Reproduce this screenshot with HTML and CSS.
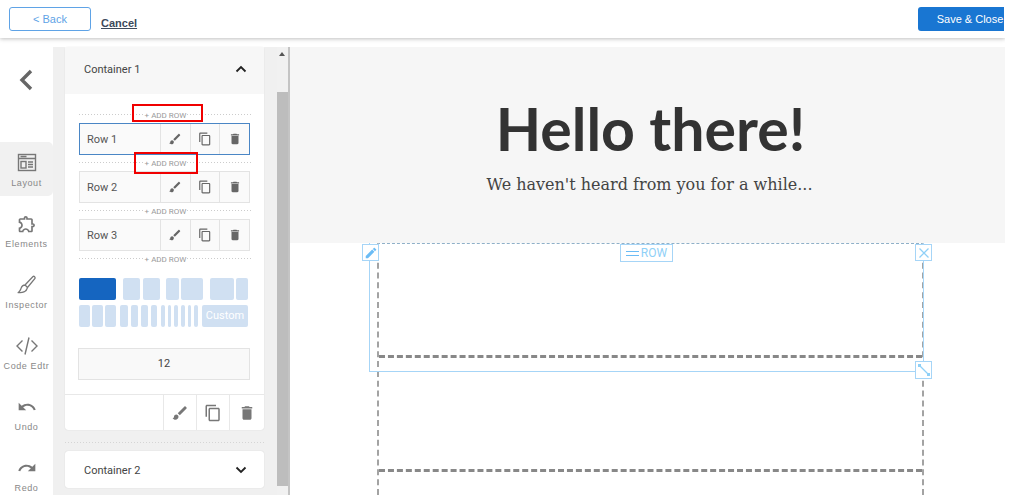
FILE: index.html
```html
<!DOCTYPE html>
<html lang="en">
<head>
  <meta charset="UTF-8">
  <title>Email Editor</title>
  <link rel="stylesheet" href="styles.css">
</head>
<body>

  <svg class="defs" width="0" height="0">
    <symbol id="i-brush" viewBox="0 0 24 24"><path d="M7 14c-1.66 0-3 1.34-3 3 0 1.31-1.16 2-2 2 .92 1.22 2.49 2 4 2 2.21 0 4-1.79 4-4 0-1.66-1.34-3-3-3zm13.71-9.37l-1.34-1.34c-.39-.39-1.02-.39-1.41 0L9 12.25 11.75 15l8.96-8.96c.39-.39.39-1.02 0-1.41z"/></symbol>
    <symbol id="i-copy" viewBox="0 0 24 24"><path d="M16 1H4c-1.1 0-2 .9-2 2v14h2V3h12V1zm3 4H8c-1.1 0-2 .9-2 2v14c0 1.1.9 2 2 2h11c1.1 0 2-.9 2-2V7c0-1.1-.9-2-2-2zm0 16H8V7h11v14z"/></symbol>
    <symbol id="i-trash" viewBox="0 0 24 24"><path d="M6 19c0 1.1.9 2 2 2h8c1.1 0 2-.9 2-2V7H6v12zM19 4h-3.5l-1-1h-5l-1 1H5v2h14V4z"/></symbol>
  </svg>

  <div class="app">

    <!-- Top bar -->
    <header class="topbar">
      <button class="btn-back">&lt; Back</button>
      <a class="cancel">Cancel</a>
      <button class="btn-save">Save &amp; Close</button>
    </header>

    <div class="workspace">

      <!-- Left nav -->
      <nav class="nav">
        <div class="nav-back">
          <svg width="24" height="24" viewBox="0 0 24 24"><path d="M16 3 L7 12 L16 21" fill="none" stroke="#666" stroke-width="3.4"/></svg>
        </div>
        <div class="nav-item active">
          <svg width="20" height="20" viewBox="0 0 20 20" fill="none" stroke="#777" stroke-width="1.4">
            <rect x="1.5" y="1.5" width="17" height="16"/>
            <path d="M1.5 5.5h17M3.5 3.5h6"/>
            <rect x="4" y="8.5" width="5" height="6.5"/>
            <path d="M11 9h5M11 11.5h5M11 14h5" stroke-width="1.5"/>
          </svg>
          <span>Layout</span>
        </div>
        <div class="nav-item">
          <svg width="22" height="22" viewBox="0 0 24 24" fill="#777"><path d="M10.5 4.5c.28 0 .5.22.5.5v2h6v6h2c.28 0 .5.22.5.5s-.22.5-.5.5h-2v6h-2.12c-.68-1.75-2.39-3-4.38-3s-3.7 1.25-4.38 3H4v-2.12c1.75-.68 3-2.39 3-4.38 0-1.99-1.24-3.7-2.99-4.38L4 7h6V5c0-.28.22-.5.5-.5m0-2C9.12 2.5 8 3.62 8 5H4c-1.1 0-1.99.9-1.99 2v3.8h.29c1.49 0 2.7 1.21 2.7 2.7s-1.21 2.7-2.7 2.7H2V20c0 1.1.9 2 2 2h3.8v-.3c0-1.49 1.21-2.7 2.7-2.7s2.7 1.21 2.7 2.7v.3H17c1.1 0 2-.9 2-2v-4c1.38 0 2.5-1.12 2.5-2.5S20.38 11 19 11V7c0-1.1-.9-2-2-2h-4c0-1.38-1.12-2.5-2.5-2.5z"/></svg>
          <span>Elements</span>
        </div>
        <div class="nav-item">
          <svg width="20" height="20" viewBox="0 0 20 20" fill="none" stroke="#777" stroke-width="1.3"><path d="M8 10 L16 1.5 C17 .8 18.6 2 18 3.4 L10.5 12.5 Z M8 10 C5 10 4.5 12 3.8 14 C3.4 15.5 2.5 16.5 1.5 17.5 C5 18 9.5 17 10.5 12.5"/></svg>
          <span>Inspector</span>
        </div>
        <div class="nav-item">
          <svg width="24" height="20" viewBox="0 0 24 20" fill="none" stroke="#777" stroke-width="1.4"><path d="M7.5 4.5 L2 10 L7.5 15.5 M16.5 4.5 L22 10 L16.5 15.5 M14 1.5 L10 18.5"/></svg>
          <span>Code Edtr</span>
        </div>
        <div class="nav-item">
          <svg width="24" height="20" viewBox="0 0 24 24" fill="#777"><path d="M12.5 8c-2.65 0-5.05.99-6.9 2.6L2 7v9h9l-3.62-3.62c1.39-1.16 3.16-1.88 5.12-1.88 3.54 0 6.55 2.31 7.6 5.5l2.37-.78C21.08 11.03 17.15 8 12.5 8z"/></svg>
          <span>Undo</span>
        </div>
        <div class="nav-item">
          <svg width="24" height="20" viewBox="0 0 24 24" fill="#777"><path d="M18.4 10.6C16.55 8.99 14.15 8 11.5 8c-4.65 0-8.58 3.03-9.96 7.22L3.9 16c1.05-3.19 4.05-5.5 7.6-5.5 1.95 0 3.73.72 5.12 1.88L13 16h9V7l-3.6 3.6z"/></svg>
          <span>Redo</span>
        </div>
      </nav>

      <!-- Container panel -->
      <aside class="side">
        <section class="panel">
          <div class="panel-head">
            <span>Container 1</span>
            <svg width="12" height="8" viewBox="0 0 12 8"><path d="M1.5 6.5 L6 2 L10.5 6.5" fill="none" stroke="#222" stroke-width="1.8"/></svg>
          </div>

          <div class="panel-body">
            <div class="add-row"><span>+ ADD ROW</span><i class="mark mark-a"></i></div>
            <div class="row selected">
              <div class="row-name">Row 1</div>
              <div class="row-tool"><svg><use href="#i-brush"/></svg></div>
              <div class="row-tool"><svg><use href="#i-copy"/></svg></div>
              <div class="row-tool"><svg><use href="#i-trash"/></svg></div>
            </div>
            <div class="add-row"><span>+ ADD ROW</span><i class="mark mark-b"></i></div>
            <div class="row">
              <div class="row-name">Row 2</div>
              <div class="row-tool"><svg><use href="#i-brush"/></svg></div>
              <div class="row-tool"><svg><use href="#i-copy"/></svg></div>
              <div class="row-tool"><svg><use href="#i-trash"/></svg></div>
            </div>
            <div class="add-row"><span>+ ADD ROW</span></div>
            <div class="row">
              <div class="row-name">Row 3</div>
              <div class="row-tool"><svg><use href="#i-brush"/></svg></div>
              <div class="row-tool"><svg><use href="#i-copy"/></svg></div>
              <div class="row-tool"><svg><use href="#i-trash"/></svg></div>
            </div>
            <div class="add-row"><span>+ ADD ROW</span></div>

            <div class="cols cols-top">
              <div class="set"><i class="on w37"></i></div>
              <div class="set g3 ml7"><i class="w17"></i><i class="w17"></i></div>
              <div class="set g2 ml6"><i class="w13"></i><i class="w22"></i></div>
              <div class="set g2 ml7"><i class="w24"></i><i class="w12"></i></div>
            </div>
            <div class="cols cols-bottom">
              <div class="set g2"><i class="w11"></i><i class="w11"></i><i class="w11"></i></div>
              <div class="set g3 ml4"><i class="w8"></i><i class="w7"></i><i class="w7"></i><i class="w6"></i></div>
              <div class="set g3 ml4"><i class="w4"></i><i class="w3"></i><i class="w4"></i><i class="w4"></i><i class="w3"></i><i class="w4"></i></div>
              <div class="custom">Custom</div>
            </div>

            <div class="size-box">12</div>
          </div>

          <div class="panel-tools">
            <div class="panel-tool"><svg><use href="#i-brush"/></svg></div>
            <div class="panel-tool"><svg><use href="#i-copy"/></svg></div>
            <div class="panel-tool"><svg><use href="#i-trash"/></svg></div>
          </div>
        </section>

        <div class="panel-gap"></div>

        <section class="panel panel-closed">
          <span>Container 2</span>
          <svg width="12" height="8" viewBox="0 0 12 8"><path d="M1.5 1.5 L6 6 L10.5 1.5" fill="none" stroke="#222" stroke-width="1.8"/></svg>
        </section>
      </aside>

      <div class="scrollbar">
        <div class="scroll-up"></div>
        <div class="scroll-thumb"></div>
      </div>

      <!-- Email canvas -->
      <main class="canvas">
        <div class="hero">
          <h1>Hello there!</h1>
          <p>We haven't heard from you for a while...</p>
        </div>
        <div class="stage">
          <div class="column-frame">
            <div class="column first"></div>
            <div class="column"></div>
            <div class="column"></div>
          </div>
          <div class="row-frame"></div>
          <div class="handle h-edit">
            <svg width="14" height="14" viewBox="0 0 24 24" fill="#6bbcf5"><path d="M3 17.25V21h3.75L17.81 9.94l-3.75-3.75L3 17.25zM20.71 7.04c.39-.39.39-1.02 0-1.41l-2.34-2.34c-.39-.39-1.02-.39-1.41 0l-1.83 1.83 3.75 3.75 1.83-1.83z"/></svg>
          </div>
          <div class="handle h-row"><b></b>ROW</div>
          <div class="handle h-close">
            <svg width="12" height="12" viewBox="0 0 12 12"><path d="M1.5 1.5 L10.5 10.5 M10.5 1.5 L1.5 10.5" stroke="#8fd0f7" stroke-width="1.3"/></svg>
          </div>
          <div class="handle h-resize">
            <svg width="14" height="14" viewBox="0 0 14 14" fill="#8fd0f7"><path d="M2.5 2.5 L11.5 11.5" stroke="#8fd0f7" stroke-width="1.2"/><rect x="1" y="1" width="3" height="3"/><rect x="10" y="10" width="3" height="3"/></svg>
          </div>
        </div>
      </main>

    </div>
  </div>

</body>
</html>
```

FILE: styles.css
```css
* {
  box-sizing: border-box;
}
html, body {
  height: 100%;
}
body {
  margin: 0;
  background-color: white;
  font-family: Roboto, "Liberation Sans", sans-serif;
  overflow: hidden;
}
.defs {
  display: block;
  height: 0;
}
.app {
  width: 1005px;
  height: 495px;
  display: flex;
  flex-direction: column;
  overflow: hidden;
}

/* Top bar */
.topbar {
  height: 38px;
  flex: none;
  display: flex;
  align-items: flex-start;
  padding: 7px 0 0 9px;
  background-color: white;
  box-shadow: 0 1px 4px rgba(0,0,0,0.25);
  position: relative;
}
.btn-back {
  width: 82px;
  height: 24px;
  background: white;
  border: 1px solid #5fa3e6;
  border-radius: 3px;
  color: #5fa3e6;
  font: 11px "Liberation Sans", Arial, sans-serif;
  padding: 0;
}
.cancel {
  margin: 10px 0 0 10px;
  font: bold 11px "Liberation Sans", Arial, sans-serif;
  color: #3d4a5c;
  text-decoration: underline;
}
.btn-save {
  margin-left: auto;
  margin-right: 1px;
  width: 86px;
  height: 24px;
  background-color: #1976d2;
  border: none;
  border-radius: 3px 0 0 3px;
  color: white;
  font: 11px "Liberation Sans", Arial, sans-serif;
  padding: 0 0 0 18px;
  white-space: nowrap;
}

.workspace {
  flex: 1;
  display: flex;
  margin-top: 9px;
  min-height: 0;
}

/* Left nav */
.nav {
  width: 53px;
  flex: none;
  background-color: white;
}
.nav-back {
  height: 95px;
  padding-top: 21px;
  text-align: center;
}
.nav-item {
  height: 54px;
  margin-bottom: 7px;
  display: flex;
  flex-direction: column;
  align-items: center;
  padding-top: 11px;
  border-radius: 0 5px 5px 0;
  font: 9px "Liberation Sans", Arial, sans-serif;
  letter-spacing: 0.6px;
  color: #888;
}
.nav-item svg {
  height: 20px;
  flex: none;
}
.nav-item span {
  margin-top: 5px;
  white-space: nowrap;
}
.nav-item.active {
  background-color: #f1f1f1;
}

/* Panel column */
.side {
  width: 224px;
  flex: none;
  padding: 0 13px 0 12px;
  background-color: #f0f0f0;
}
.panel {
  width: 199px;
  background-color: white;
  border-radius: 3px;
  box-shadow: 0 0 1px rgba(0,0,0,0.2);
}
.panel-head {
  height: 47px;
  padding: 0 17px 3px 19px;
  display: flex;
  align-items: center;
  justify-content: space-between;
  background-color: #f7f7f7;
  font-size: 11px;
  color: #444;
}
.panel-body {
  padding: 13px 14px 14px 14px;
}
.add-row {
  height: 16px;
  width: 173px;
  position: relative;
  display: flex;
  align-items: center;
  justify-content: center;
  background-image: linear-gradient(to right, #ccc 50%, transparent 50%);
  background-size: 3px 1px;
  background-repeat: repeat-x;
  background-position: 0 7px;
  font-size: 8px;
  color: #999;
}
.add-row span {
  background-color: white;
  padding: 0 1px;
}
.mark {
  position: absolute;
  border: 2px solid #f00000;
}
.mark-a {
  left: 53px;
  top: -3px;
  width: 71px;
  height: 18px;
}
.mark-b {
  left: 55px;
  top: -3px;
  width: 64px;
  height: 22px;
}
.row {
  width: 171px;
  height: 32px;
  display: flex;
  border: 1px solid #e3e3e3;
  background-color: #fafafa;
}
.row.selected {
  border-color: #4a86c5;
}
.row-name {
  width: 81px;
  font-size: 11px;
  line-height: 32px;
  padding-left: 7px;
  color: #555;
}
.row-tool {
  width: 30px;
  display: flex;
  align-items: center;
  justify-content: center;
  border-left: 1px solid #e3e3e3;
}
.row-tool svg {
  width: 14px;
  height: 14px;
  fill: #666;
}

/* Column presets */
.cols {
  display: flex;
}
.cols-top {
  margin-top: 11px;
  height: 22px;
}
.cols-bottom {
  margin-top: 5px;
  height: 22px;
}
.set {
  display: flex;
}
.set i {
  display: block;
  background-color: #d0e0f2;
  border-radius: 2px;
}
.set i.on {
  background-color: #1565c0;
}
.g2 { gap: 2px; }
.g3 { gap: 3px; }
.ml4 { margin-left: 4px; }
.ml6 { margin-left: 6px; }
.ml7 { margin-left: 7px; }
.w3 { width: 3px; }
.w4 { width: 4px; }
.w6 { width: 6px; }
.w7 { width: 7px; }
.w8 { width: 8px; }
.w11 { width: 11px; }
.w12 { width: 12px; }
.w13 { width: 13px; }
.w17 { width: 17px; }
.w22 { width: 22px; }
.w24 { width: 24px; }
.w37 { width: 37px; }
.custom {
  margin-left: 4px;
  width: 46px;
  background-color: #d0e0f2;
  border-radius: 2px;
  color: white;
  font-size: 11px;
  line-height: 22px;
  text-align: center;
}
.size-box {
  margin: 21px 0 0 -1px;
  width: 172px;
  height: 32px;
  border: 1px solid #e3e3e3;
  background-color: #f9f9f9;
  text-align: center;
  font-size: 11px;
  line-height: 30px;
  color: #444;
}
.panel-tools {
  height: 36px;
  display: flex;
  justify-content: flex-end;
  border-top: 1px solid #e8e8e8;
}
.panel-tool {
  width: 33px;
  display: flex;
  align-items: center;
  justify-content: center;
  border-left: 1px solid #e8e8e8;
}
.panel-tool:last-child {
  width: 35px;
}
.panel-tool svg {
  width: 18px;
  height: 18px;
  fill: #777;
}
.panel-gap {
  height: 21px;
  background-image: linear-gradient(to right, #d5d5d5 50%, transparent 50%);
  background-size: 3px 1px;
  background-repeat: repeat-x;
  background-position: 0 12px;
}
.panel-closed {
  height: 37px;
  display: flex;
  align-items: center;
  justify-content: space-between;
  padding: 1px 17px 0 19px;
  font-size: 11px;
  color: #444;
}

/* Scrollbar */
.scrollbar {
  width: 13px;
  flex: none;
  background-color: #f1f1f1;
  border-right: 2px solid #c4c4c4;
  padding-right: 0;
  position: relative;
}
.scroll-up {
  height: 45px;
  padding-top: 5px;
}
.scroll-up::before {
  content: "";
  display: block;
  width: 0;
  margin-left: 2px;
  border-left: 3px solid transparent;
  border-right: 3px solid transparent;
  border-bottom: 4px solid #555;
}
.scroll-thumb {
  height: 394px;
  background-color: #bdbdbd;
}

/* Canvas */
.canvas {
  flex: 1;
  background-color: white;
  display: flex;
  flex-direction: column;
  min-width: 0;
}
.hero {
  height: 196px;
  flex: none;
  background-color: #f6f6f6;
  text-align: center;
  padding-top: 47px;
}
.hero h1 {
  margin: 0;
  padding-left: 6px;
  font: bold 59px/70px Lato, sans-serif;
  color: #333;
}
.hero p {
  margin: 9px 0 0;
  padding-left: 4px;
  font: 16px/24px "DejaVu Serif", serif;
  color: #444;
}
.stage {
  flex: 1;
  position: relative;
}
.column-frame {
  position: absolute;
  left: 87px;
  top: 0;
  width: 547px;
  bottom: 0;
  border-left: 2px dashed #a3a3a3;
  border-right: 2px dashed #a3a3a3;
  border-top: 1px dashed #8fb0c8;
}
.column {
  height: 114px;
  border-bottom: 3px dashed #888;
}
.row-frame {
  position: absolute;
  left: 79px;
  top: 0;
  width: 555px;
  height: 129px;
  border: 1px solid #a6d5f7;
  border-top: none;
}
.handle {
  position: absolute;
  display: flex;
  align-items: center;
  justify-content: center;
  background-color: white;
  border: 1px solid #a6d5f7;
}
.h-edit {
  left: 72px;
  top: 1px;
  width: 17px;
  height: 17px;
}
.h-row {
  left: 330px;
  top: 1px;
  width: 53px;
  height: 18px;
  font-size: 12px;
  color: #8fd0f7;
}
.h-row b {
  width: 13px;
  height: 5px;
  margin-right: 2px;
  border-top: 1px solid #6bbcf5;
  border-bottom: 1px solid #6bbcf5;
}
.h-close {
  left: 625px;
  top: 1px;
  width: 17px;
  height: 17px;
}
.h-resize {
  left: 625px;
  top: 118px;
  width: 17px;
  height: 18px;
}
```
